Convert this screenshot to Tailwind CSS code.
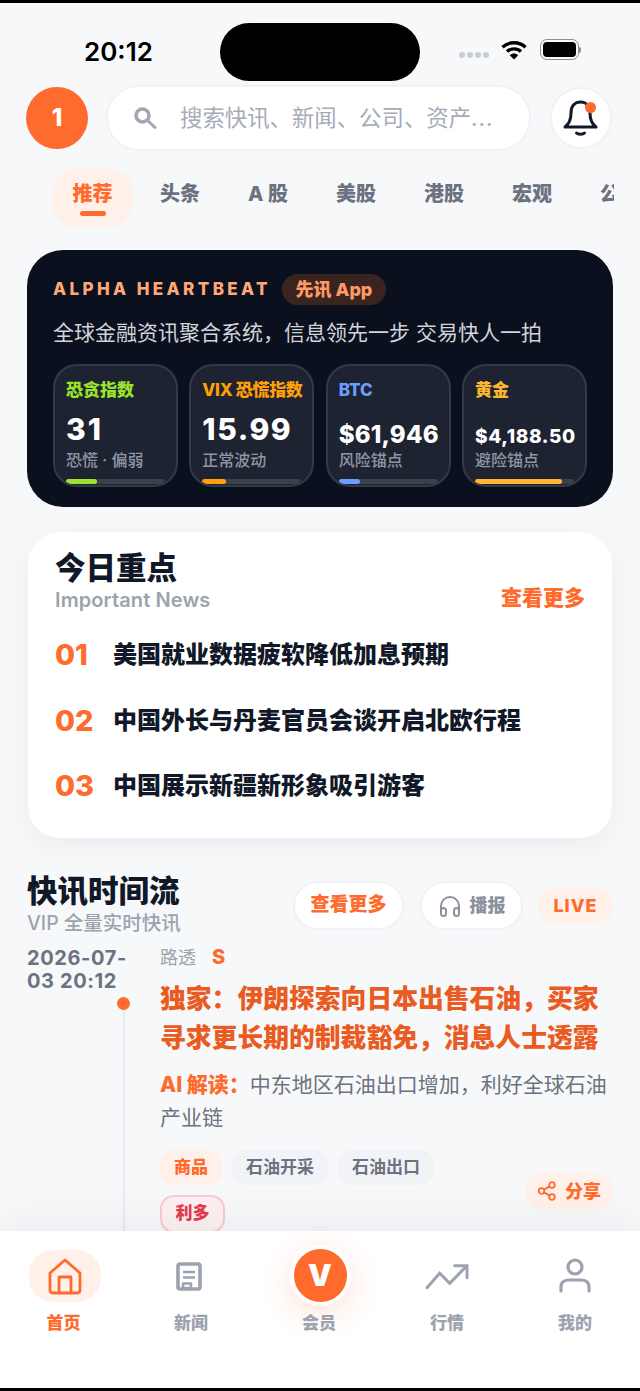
<!DOCTYPE html>
<html lang="zh">

<head>
    <meta charset="UTF-8">
    <meta name="viewport" content="width=device-width, initial-scale=1.0">
    <title>先讯</title>
    <script src="https://cdn.jsdelivr.net/npm/@tailwindcss/browser@4"></script>
</head>

<body class="bg-black">
    <div class="w-[640px] h-[1391px] border-y-[3px] border-black bg-[#f7f8fa] flex flex-col overflow-hidden font-['Inter','Noto_Sans_CJK_SC',sans-serif] text-[#111827]">

        <main class="flex-1 min-h-0 overflow-hidden relative">
            <!-- status bar -->
            <div class="h-[82px] flex items-start">
                <div class="w-[220px] pl-[84px] pt-[34px] text-[26px] leading-[30px] font-semibold text-black">20:12</div>
                <div class="w-[200px] h-[58px] mt-[20px] bg-black rounded-[29px]"></div>
                <div class="flex items-center pl-[39px] pt-[36px]">
                    <div class="flex gap-[2px] mt-[10px]">
                        <span class="w-[6px] h-[6px] rounded-full bg-[#c9ccd2]"></span>
                        <span class="w-[6px] h-[6px] rounded-full bg-[#c9ccd2]"></span>
                        <span class="w-[6px] h-[6px] rounded-full bg-[#c9ccd2]"></span>
                        <span class="w-[6px] h-[6px] rounded-full bg-[#c9ccd2]"></span>
                    </div>
                    <svg class="ml-[12px]" width="26" height="20" viewBox="0 0 26 20" fill="none" stroke="#000" stroke-width="3.4">
                        <path d="M1.5 7.2C7.8 1.2 18.2 1.2 24.5 7.2" />
                        <path d="M6 11.6C9.8 8 16.2 8 20 11.6" />
                        <path d="M13 19.5L8.8 15.2C11.2 13 14.8 13 17.2 15.2Z" fill="#000" stroke="none" />
                    </svg>
                    <div class="ml-[13px] flex items-center">
                        <div class="w-[39px] h-[21px] border-[1.5px] border-[#8e8e93] rounded-[7px] p-[2px]">
                            <div class="w-full h-full bg-black rounded-[4px]"></div>
                        </div>
                        <div class="w-[2px] h-[6px] bg-[#8e8e93] rounded-r-full"></div>
                    </div>
                </div>
            </div>

            <!-- search row -->
            <div class="flex items-center pl-[26px] h-[66px]">
                <div class="w-[62px] h-[62px] rounded-full bg-[#ff6b2c] text-white text-[24px] font-extrabold flex items-center justify-center">1</div>
                <div class="ml-[18px] w-[425px] h-[66px] rounded-full bg-white border-2 border-[#f1f2f6] flex items-center pl-[25px]">
                    <svg width="24" height="24" viewBox="0 0 24 24" fill="none" stroke="#a0a6b3">
                        <circle cx="9.5" cy="9.5" r="6.5" stroke-width="3.5" />
                        <path d="M14.5 14.5L22 21.5" stroke-width="3" stroke-linecap="round" />
                    </svg>
                    <span class="ml-[23px] text-[22.4px] text-[#a6abb8]">搜索快讯、新闻、公司、资产<span class="tracking-[1px]">...</span></span>
                </div>
                <div class="ml-[19px] w-[62px] h-[62px] rounded-full bg-white border-2 border-[#f1f2f6] relative flex items-center justify-center">
                    <svg width="36" height="38" viewBox="0 0 36 38" fill="none" stroke="#111827" stroke-width="3" stroke-linecap="round" stroke-linejoin="round">
                        <path d="M2 28C6 25 8 21 8 14C8 7 12 3 17.5 3C23 3 27 7 27 14C27 21 29 25 33 28Z" />
                        <path d="M13.5 34C15 35.6 20 35.6 21.5 34" />
                    </svg>
                    <span class="absolute left-[33px] top-[13px] w-[11px] h-[11px] rounded-full bg-[#ff6b2c]"></span>
                </div>
            </div>

            <!-- tabs -->
            <div class="ml-[52px] w-[562px] mt-[18px] h-[58px] overflow-hidden flex gap-[6px] text-[20px] font-extrabold text-[#6b7280]">
                <div class="w-[81px] shrink-0 h-[58px] rounded-[24px] bg-[#fff1ea] text-[#ff6b2c] relative flex items-center justify-center pb-[8px]">推荐
                    <span class="absolute left-[28px] bottom-[11px] w-[26px] h-[5px] rounded-full bg-[#ff6b2c]"></span>
                </div>
                <div class="w-[82px] shrink-0 flex items-center justify-center pb-[8px]">头条</div>
                <div class="w-[82px] shrink-0 flex items-center justify-center pb-[8px]">A 股</div>
                <div class="w-[82px] shrink-0 flex items-center justify-center pb-[8px]">美股</div>
                <div class="w-[82px] shrink-0 flex items-center justify-center pb-[8px]">港股</div>
                <div class="w-[82px] shrink-0 flex items-center justify-center pb-[8px]">宏观</div>
                <div class="w-[82px] shrink-0 flex items-center justify-center pb-[8px]">公告</div>
            </div>

            <!-- hero -->
            <section class="ml-[27px] mt-[23px] w-[586px] h-[257px] rounded-[36px] bg-[#0a101d] pl-[26px] pt-[24px]">
                <div class="flex items-center h-[31px]">
                    <span class="text-[17px] font-extrabold tracking-[3.4px] text-[#ffa877]">ALPHA HEARTBEAT</span>
                    <span class="ml-[11px] w-[104px] h-[31px] rounded-full bg-[#3a2420] text-[#ff9a66] text-[18px] font-extrabold flex items-center justify-center">先讯 App</span>
                </div>
                <p class="mt-[12px] text-[21px] leading-[32px] text-[#d1d5db]">全球金融资讯聚合系统&#xFF0C;信息领先一步 交易快人一拍</p>
                <div class="mt-[15px] w-[534px] flex justify-between">
                    <div class="w-[125px] h-[123px] rounded-[24px] bg-[#1e2331] border-2 border-[#343947] px-[11px] relative overflow-hidden">
                        <div class="mt-[12px] text-[17px] leading-[24px] font-extrabold text-[#9be22d]">恐贪指数</div>
                        <div class="mt-[9px] text-[30px] leading-[36px] font-extrabold tracking-[2px] text-white">31</div>
                        <div class="mt-[2px] text-[16px] leading-[22px] font-medium text-[#8f95a3]">恐慌 · 偏弱</div>
                        <div class="absolute left-[11px] right-[11px] bottom-[1px] h-[5px] rounded-full bg-[#3b404d]"><div class="h-full rounded-full bg-[#9be22d]" style="width:31%"></div></div>
                    </div>
                    <div class="w-[125px] h-[123px] rounded-[24px] bg-[#1e2331] border-2 border-[#343947] px-[11px] relative overflow-hidden">
                        <div class="mt-[12px] text-[17px] leading-[24px] font-extrabold tracking-[-0.3px] text-[#ff9f0a] whitespace-nowrap">VIX 恐慌指数</div>
                        <div class="mt-[9px] text-[30px] leading-[36px] font-extrabold tracking-[1.6px] text-white">15.99</div>
                        <div class="mt-[2px] text-[16px] leading-[22px] font-medium text-[#8f95a3]">正常波动</div>
                        <div class="absolute left-[11px] right-[11px] bottom-[1px] h-[5px] rounded-full bg-[#3b404d]"><div class="h-full rounded-full bg-[#ff9f0a]" style="width:24%"></div></div>
                    </div>
                    <div class="w-[125px] h-[123px] rounded-[24px] bg-[#1e2331] border-2 border-[#343947] px-[11px] relative overflow-hidden">
                        <div class="mt-[12px] text-[17px] leading-[24px] font-extrabold text-[#6d9eff]">BTC</div>
                        <div class="mt-[21px] text-[24px] leading-[24px] font-extrabold tracking-[0.2px] text-white">$61,946</div>
                        <div class="mt-[2px] text-[16px] leading-[22px] font-medium text-[#8f95a3]">风险锚点</div>
                        <div class="absolute left-[11px] right-[11px] bottom-[1px] h-[5px] rounded-full bg-[#3b404d]"><div class="h-full rounded-full bg-[#6d9eff]" style="width:22%"></div></div>
                    </div>
                    <div class="w-[125px] h-[123px] rounded-[24px] bg-[#1e2331] border-2 border-[#343947] px-[11px] relative overflow-hidden">
                        <div class="mt-[12px] text-[17px] leading-[24px] font-extrabold text-[#fdb833]">黄金</div>
                        <div class="mt-[25px] text-[19px] leading-[20px] font-extrabold tracking-[0.6px] text-white whitespace-nowrap">$4,188.50</div>
                        <div class="mt-[2px] text-[16px] leading-[22px] font-medium text-[#8f95a3]">避险锚点</div>
                        <div class="absolute left-[11px] right-[11px] bottom-[1px] h-[5px] rounded-full bg-[#3b404d]"><div class="h-full rounded-full bg-[#fdb833]" style="width:88%"></div></div>
                    </div>
                </div>
            </section>

            <!-- important -->
            <section class="ml-[28px] mt-[25px] w-[584px] h-[306px] rounded-[32px] bg-white shadow-[0_8px_30px_rgba(17,24,39,0.05)] px-[27px] pt-[16px]">
                <div class="flex justify-between items-end">
                    <div>
                        <h2 class="text-[30.5px] leading-[40px] font-extrabold text-[#111827]">今日重点</h2>
                        <p class="text-[20px] leading-[24px] font-semibold tracking-[0.1px] text-[#9ca3af]">Important News</p>
                    </div>
                    <span class="mb-[2px] text-[21px] leading-[24px] font-extrabold text-[#ff6b2c]">查看更多</span>
                </div>
                <div class="mt-[23px] flex flex-col gap-[25.5px]">
                    <div class="flex items-center h-[40px]"><span class="w-[58px] text-[29px] font-extrabold text-[#ff6b2c]">01</span><span class="text-[24px] font-extrabold">美国就业数据疲软降低加息预期</span></div>
                    <div class="flex items-center h-[40px]"><span class="w-[58px] text-[29px] font-extrabold text-[#ff6b2c]">02</span><span class="text-[24px] font-extrabold">中国外长与丹麦官员会谈开启北欧行程</span></div>
                    <div class="flex items-center h-[40px]"><span class="w-[58px] text-[29px] font-extrabold text-[#ff6b2c]">03</span><span class="text-[24px] font-extrabold">中国展示新疆新形象吸引游客</span></div>
                </div>
            </section>

            <!-- timeline header -->
            <div class="mt-[43px] pl-[27px] flex items-start">
                <div class="w-[266px] -mt-[9px]">
                    <h2 class="text-[30.5px] leading-[38px] font-extrabold">快讯时间流</h2>
                    <p class="text-[19.5px] leading-[26px] font-medium text-[#9ca3af] whitespace-nowrap">VIP 全量实时快讯</p>
                </div>
                <div class="w-[111px] h-[49px] rounded-full bg-white border-2 border-[#f1f2f6] text-[19px] font-extrabold text-[#ff6b2c] flex items-center justify-center">查看更多</div>
                <div class="ml-[16px] w-[103px] h-[49px] rounded-full bg-white border-2 border-[#f1f2f6] text-[18px] font-extrabold text-[#8b919e] flex items-center justify-center gap-[8px]">
                    <svg width="24" height="24" viewBox="0 0 24 24" fill="none" stroke="#8b919e" stroke-width="2" stroke-linecap="round">
                        <path d="M3 18V12C3 7 7 3 12 3C17 3 21 7 21 12V18" />
                        <rect x="3" y="14" width="5" height="8" rx="2.5" />
                        <rect x="16" y="14" width="5" height="8" rx="2.5" />
                    </svg>播报
                </div>
                <div class="ml-[15px] mt-[6px] w-[75px] h-[37px] rounded-full bg-[#fff1ea] text-[18px] font-extrabold tracking-[1px] text-[#ff6b2c] flex items-center justify-center">LIVE</div>
            </div>

            <!-- timeline item -->
            <div class="mt-[11px] pl-[27px] flex relative">
                <div class="w-[133px] shrink-0 relative h-[300px]">
                    <div class="w-[112px] text-[20px] leading-[23px] font-bold tracking-[0.6px] text-[#6b7280]">2026-07-03 20:12</div>
                    <span class="absolute left-[90px] top-[50px] w-[13px] h-[13px] rounded-full bg-[#ff6b2c]"></span>
                    <span class="absolute left-[96px] top-[63px] w-[2px] h-[230px] bg-[#e8eaef]"></span>
                </div>
                <div class="w-[452px]">
                    <div class="flex items-center h-[20px] text-[18px] text-[#9ca3af]">路透<span class="ml-[16px] text-[20px] font-extrabold text-[#ff6b2c]">S</span></div>
                    <h3 class="mt-[12px] text-[25.8px] leading-[39px] font-extrabold text-[#ea5b22]">独家&#xFF1A;伊朗探索向日本出售石油&#xFF0C;买家寻求更长期的制裁豁免&#xFF0C;消息人士透露</h3>
                    <p class="mt-[11px] text-[21px] leading-[33px] text-[#6b7280]"><span class="font-extrabold text-[#ff6b2c]">AI 解读&#xFF1A;</span>中东地区石油出口增加&#xFF0C;利好全球石油产业链</p>
                    <div class="mt-[16px] flex flex-wrap gap-x-[10px] gap-y-[10px] w-[290px]">
                        <span class="h-[35px] px-[14px] rounded-[14px] bg-[#fff1ea] text-[17px] font-extrabold text-[#ff6b2c] flex items-center">商品</span>
                        <span class="h-[35px] px-[14px] rounded-[14px] bg-[#f2f3f7] text-[17px] font-semibold text-[#6b7280] flex items-center">石油开采</span>
                        <span class="h-[35px] px-[14px] rounded-[14px] bg-[#f2f3f7] text-[17px] font-semibold text-[#6b7280] flex items-center">石油出口</span>
                        <span class="h-[38px] w-[65px] rounded-[14px] bg-[#fdf0f1] border-2 border-[#fbc9cf] text-[17px] font-extrabold text-[#e5394b] flex items-center justify-center">利多</span>
                    </div>
                </div>
            </div>

            <div class="absolute left-[525px] top-[1169px] w-[88px] h-[38px] rounded-full bg-[#fff1ea] text-[18px] font-extrabold text-[#ff6b2c] flex items-center justify-center gap-[8px]">
                <svg width="20" height="20" viewBox="0 0 20 20" fill="none" stroke="#ff6b2c" stroke-width="1.8">
                    <circle cx="15" cy="4" r="2.8" /><circle cx="4.5" cy="10" r="2.8" /><circle cx="15" cy="16" r="2.8" />
                    <path d="M7 8.6L12.6 5.4M7 11.4L12.6 14.6" />
                </svg>分享
            </div>
        </main>

        <!-- bottom nav -->
        <nav class="h-[157px] shrink-0 bg-white shadow-[0_-10px_40px_rgba(17,24,39,0.05)] relative flex text-[17px] font-extrabold text-[#9ca3af]">
            <div class="w-[127px] flex flex-col items-center pt-[19px]">
                <div class="ml-[2px] w-[72px] h-[52px] rounded-[24px] bg-[#fff1ea] flex items-center justify-center">
                    <svg width="34" height="37" viewBox="0 0 34 37" fill="none" stroke="#ff6b2c" stroke-width="2.8" stroke-linejoin="round">
                        <path d="M17 2L32 15V32C32 34 31 35 29 35H5C3 35 2 34 2 32V15Z" />
                        <path d="M11 35V19H23V35" />
                    </svg>
                </div>
                <span class="mt-[9px] leading-[24px] text-[#ff6b2c]">首页</span>
            </div>
            <div class="w-[128px] flex flex-col items-center pt-[19px]">
                <div class="h-[52px] flex items-center justify-center -ml-[4px]">
                    <svg width="26" height="29" viewBox="0 0 26 29" fill="none" stroke="#9ca3af" stroke-width="3.6" stroke-linejoin="round">
                        <rect x="2" y="2" width="22" height="25" rx="2" />
                        <path d="M7 10H19M7 15.5H19M7 21.5H15V26H7Z" stroke-width="2.6" />
                    </svg>
                </div>
                <span class="mt-[9px] leading-[24px]">新闻</span>
            </div>
            <div class="w-[128px] flex flex-col items-center pt-[14px]">
                <div class="ml-[2px] w-[61px] h-[61px] rounded-full bg-[#ff6b2c] border-4 border-white shadow-[0_8px_30px_rgba(255,107,44,0.2)] text-white text-[30px] font-black flex items-center justify-center">V</div>
                <span class="mt-[5px] leading-[24px]">会员</span>
            </div>
            <div class="w-[128px] flex flex-col items-center pt-[19px]">
                <div class="h-[52px] flex items-center justify-center">
                    <svg width="44" height="27" viewBox="0 0 44 27" fill="none" stroke="#9ca3af" stroke-width="3" stroke-linecap="round">
                        <path d="M2 24.7L14.7 10.3L24.7 20.3L41 3.7" />
                        <path d="M29.7 2.7H42V14.7" />
                    </svg>
                </div>
                <span class="mt-[9px] leading-[24px]">行情</span>
            </div>
            <div class="w-[128px] flex flex-col items-center pt-[19px]">
                <div class="h-[52px] flex items-center justify-center">
                    <svg width="32" height="36" viewBox="0 0 32 36" fill="none" stroke="#9ca3af" stroke-width="3.2" stroke-linecap="round">
                        <circle cx="16" cy="9" r="7" />
                        <path d="M2 33V29C2 24 6 22 10 22H22C26 22 30 24 30 29V33" />
                    </svg>
                </div>
                <span class="mt-[9px] leading-[24px]">我的</span>
            </div>
        </nav>
    </div>
</body>

</html>
